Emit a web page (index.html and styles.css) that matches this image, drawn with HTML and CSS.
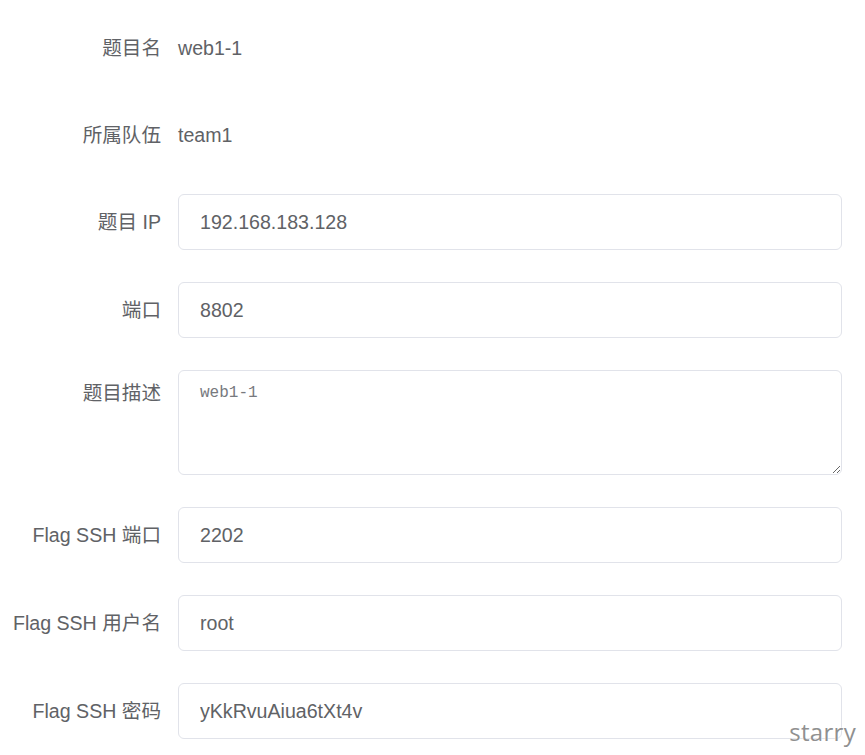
FILE: index.html
```html
<!DOCTYPE html>
<html lang="zh-CN">
<head>
<meta charset="utf-8">
<title>题目</title>
<link rel="stylesheet" href="styles.css">
</head>
<body>
<form class="form">
  <div class="item item-static">
    <label class="label">题目名</label>
    <div class="content"><span class="value">web1-1</span></div>
  </div>
  <div class="item item-static">
    <label class="label">所属队伍</label>
    <div class="content"><span class="value">team1</span></div>
  </div>
  <div class="item">
    <label class="label">题目 IP</label>
    <div class="content"><input class="input" type="text" value="192.168.183.128"></div>
  </div>
  <div class="item">
    <label class="label">端口</label>
    <div class="content"><input class="input" type="text" value="8802"></div>
  </div>
  <div class="item item-area">
    <label class="label">题目描述</label>
    <div class="content"><textarea class="textarea" placeholder="web1-1"></textarea></div>
  </div>
  <div class="item">
    <label class="label">Flag SSH 端口</label>
    <div class="content"><input class="input" type="text" value="2202"></div>
  </div>
  <div class="item">
    <label class="label">Flag SSH 用户名</label>
    <div class="content"><input class="input" type="text" value="root"></div>
  </div>
  <div class="item">
    <label class="label">Flag SSH 密码</label>
    <div class="content"><input class="input" type="text" value="yKkRvuAiua6tXt4v"></div>
  </div>
</form>
<div class="watermark">starry</div>
</body>
</html>
```
FILE: styles.css
```css
html, body {
  margin: 0;
  padding: 0;
  background: #ffffff;
}
body {
  font-family: "Liberation Sans", "Noto Sans CJK SC", sans-serif;
  font-size: 19.6px;
  color: #606266;
  height: 755px;
  overflow: hidden;
  position: relative;
}
.form {
  display: flex;
  flex-direction: column;
  gap: 32px;
  padding-top: 20px;
  width: 842px;
}
.item {
  display: flex;
  align-items: flex-start;
}
.label {
  flex: 0 0 178px;
  box-sizing: border-box;
  padding-right: 17px;
  text-align: right;
  height: 56px;
  line-height: 56px;
  color: #606266;
  white-space: nowrap;
}
.item-static .label {
  height: 55px;
  line-height: 56px;
}
.item-area .label {
  height: 46px;
  line-height: 46px;
}
.content {
  flex: 1;
  min-width: 0;
}
.value {
  display: block;
  height: 55px;
  line-height: 56px;
  color: #606266;
}
.input {
  display: block;
  width: 100%;
  box-sizing: border-box;
  height: 56px;
  padding: 0 21px;
  border: 1.4px solid #e1e3ea;
  border-radius: 6px;
  font-family: "Liberation Sans", "Noto Sans CJK SC", sans-serif;
  font-size: 19.6px;
  color: #606266;
  background: #fff;
  outline: none;
}
.textarea {
  display: block;
  width: 100%;
  box-sizing: border-box;
  height: 105px;
  padding: 9px 21px;
  border: 1.4px solid #e1e3ea;
  border-radius: 6px;
  font-family: "Liberation Mono", monospace;
  font-size: 16px;
  line-height: 26px;
  color: #606266;
  background: #fff;
  outline: none;
  resize: vertical;
}
.textarea::placeholder {
  color: #77797e;
}
.watermark {
  position: absolute;
  right: 9px;
  bottom: 8px;
  font-family: "Open Sans", "Liberation Sans", sans-serif;
  font-size: 24px;
  line-height: 30px;
  color: #909090;
  letter-spacing: 0.3px;
  text-shadow: 0 0 2px #fff, 0 0 1px #fff;
}
```
